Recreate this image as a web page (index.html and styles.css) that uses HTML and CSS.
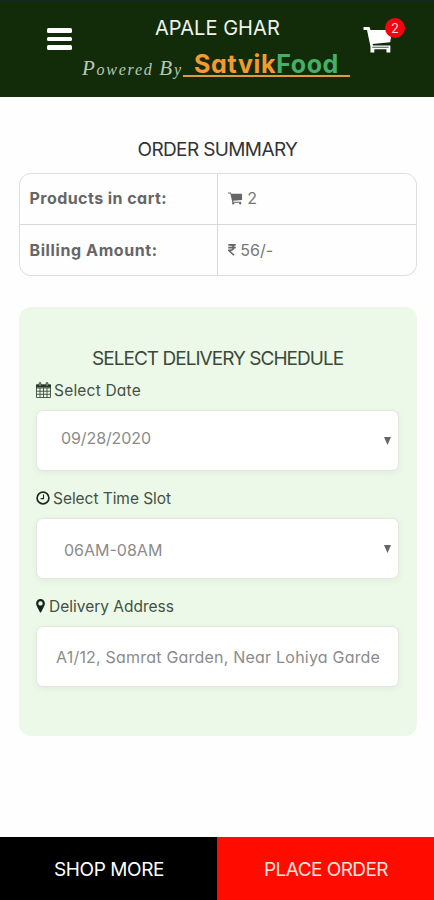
FILE: index.html
```html
<!DOCTYPE html>
<html lang="en">
<head>
<meta charset="utf-8">
<meta name="viewport" content="width=device-width, initial-scale=1">
<title>Apale Ghar - Order Summary</title>
<link rel="stylesheet" href="styles.css">
</head>
<body>
<div class="page">
  <header class="header">
    <button class="menu" aria-label="Menu"><i></i><i></i><i></i></button>
    <div class="brand">
      <h1 class="store">APALE GHAR</h1>
      <div class="tagline">
        <span class="powered"><span class="initial">P</span>owered <span class="initial">B</span>y</span>
        <span class="logo"><b class="satvik">Satvik</b><b class="food">Food</b></span>
      </div>
    </div>
    <div class="cart">
      <svg class="cart-icon" viewBox="0 0 32 28"><path fill="#fff" d="M1 0h6.200l1 3H31l-2.400 12.800-18.300 1.900.5 1.600h18v7.200h-4v-3.400H12.200v3.400h-4v-6.300L4.600 3H1z"/><path stroke="#122c0a" stroke-width=".8" d="M10 21h17"/></svg>
      <span class="badge">2</span>
    </div>
  </header>

  <main class="main">
    <h2 class="heading summary-title">ORDER SUMMARY</h2>
    <section class="summary">
      <div class="cell label products">Products in cart:</div>
      <div class="cell value"><svg class="mini-cart" viewBox="0 0 16 14"><path fill="#666" d="M0 1h3l.5 1.500H15V9l-9.500 1 .2 1H14v1H4.700L2.500 2.200H0z"/><circle cx="5.500" cy="12.800" r="1.200" fill="#666"/><circle cx="13" cy="12.800" r="1.200" fill="#666"/></svg><span>2</span></div>
      <div class="cell label billing">Billing Amount:</div>
      <div class="cell value"><svg class="rupee" viewBox="0 0 9 13"><path fill="none" stroke="#666" stroke-width="1.800" d="M.3 1.300h8.400M.3 4.400h8.400M.3 1.300h2.500c4.800 0 4.800 6.100 0 6.100H.8L6.800 13"/></svg><span class="amount">56/-</span></div>
    </section>

    <section class="schedule">
      <h2 class="heading schedule-title">SELECT DELIVERY SCHEDULE</h2>
      <div class="field">
        <div class="caption"><svg class="calendar" viewBox="0 0 15 16"><path fill="none" stroke="#26382a" stroke-width=".8" d="M.5 3h14v12.500H.5zM.5 6h14M.5 9.200h14M.5 12.300h14M4 6v9.500M7.500 6v9.500M11 6v9.500"/><path fill="#26382a" d="M0 2.500h15V5.500H0z"/><path stroke="#26382a" stroke-width="2.600" stroke-linecap="round" d="M4 1.500v2M11 1.500v2"/><path stroke="#edf9e8" stroke-width=".8" d="M4 1.200v2.600M11 1.200v2.600"/></svg><span class="cap-date">Select Date</span></div>
        <div class="control date"><span>09/28/2020</span><svg class="arrow" viewBox="0 0 7 8"><path fill="#666" d="M0 0h7L3.500 8z"/></svg></div>
      </div>
      <div class="field">
        <div class="caption"><svg class="clock" viewBox="0 0 14 14"><circle cx="7" cy="7" r="5.900" fill="none" stroke="#1d2c20" stroke-width="1.700"/><path fill="none" stroke="#1d2c20" stroke-width="1.100" d="M7.500 3.400v4.200H4.600"/></svg><span class="cap-time">Select Time Slot</span></div>
        <div class="control time"><span>06AM-08AM</span><svg class="arrow" viewBox="0 0 7 8"><path fill="#666" d="M0 0h7L3.500 8z"/></svg></div>
      </div>
      <div class="field">
        <div class="caption"><svg class="pin" viewBox="0 0 9 14"><path fill="#17231a" fill-rule="evenodd" d="M4.500 0A4.400 4.400 0 0 0 .1 4.400c0 1.200.4 2 .9 3L3.800 13c.3.8 1.100.8 1.400 0L8 7.400c.5-1 .9-1.800.9-3A4.400 4.400 0 0 0 4.500 0zm0 2.200a2.200 2.200 0 1 1 0 4.400 2.200 2.200 0 0 1 0-4.400z"/></svg><span class="cap-address">Delivery Address</span></div>
        <div class="control address"><span>A1/12, Samrat Garden, Near Lohiya Garde</span></div>
      </div>
    </section>
  </main>

  <footer class="footer">
    <button class="action shop"><span>SHOP MORE</span></button>
    <button class="action order"><span>PLACE ORDER</span></button>
  </footer>
</div>
</body>
</html>
```
FILE: styles.css
```css
* { box-sizing: border-box; }
body {
  margin: 0;
  background: #fefefe;
  font-family: Inter, "Liberation Sans", sans-serif;
  font-feature-settings: "cv11" 1;
  color: #666;
}
h1, h2 { margin: 0; font-weight: 400; }
svg { display: block; flex: none; }
button { border: 0; padding: 0; font: inherit; font-feature-settings: inherit; }
span, b, h1, h2, .label { white-space: nowrap; }

.page { height: 900px; display: flex; flex-direction: column; }

.header {
  height: 97px;
  flex: none;
  display: grid;
  grid-template-columns: 80px 271px 83px;
  background: #122c0a;
  border-top: 2px solid #122a1c;
}
.menu {
  align-self: start;
  margin: 26px 0 0 47px;
  width: 25px;
  display: flex;
  flex-direction: column;
  gap: 4px;
  background: none;
}
.menu i { height: 4.5px; background: #fff; border-radius: 1.5px; }
.brand { padding-top: 14px; }
.store {
  margin-left: 75px;
  font-size: 20px;
  line-height: 24px;
  letter-spacing: .05px;
  color: #eef3ec;
}
.tagline { display: flex; height: 38px; }
.powered {
  width: 103px;
  padding: 16px 0 0 2px;
  font: italic 16px/24px "Liberation Serif", serif;
  letter-spacing: 1.75px;
  color: #b9c9b5;
}
.initial { font-size: 21px; }
.logo {
  width: 167px;
  height: 37px;
  padding: 11px 0 0 11px;
  border-bottom: 2px solid #e39a3c;
  font-size: 25px;
  line-height: 26px;
}
.satvik { color: #f69a2d; letter-spacing: .7px; }
.food { color: #45b068; letter-spacing: .55px; }
.cart { position: relative; }
.cart-icon { width: 32px; height: 27px; margin: 25px 0 0 11px; }
.badge {
  position: absolute;
  left: 34px;
  top: 16px;
  width: 20px;
  height: 20px;
  border-radius: 50%;
  background: #f4040c;
  color: #ffd9d9;
  font-size: 13px;
  line-height: 20px;
  text-align: center;
}

.main { flex: 1; padding: 38px 17.5px 0 18.5px; }
.heading { font-size: 19px; line-height: 30px; }
.summary-title { margin-left: 119px; color: #333; letter-spacing: -.62px; }
.summary {
  margin-top: 8px;
  height: 103px;
  display: grid;
  grid-template: 1fr 1fr / 1fr 1fr;
  gap: 1.5px;
  background: #d8d8d8;
  border: 1.5px solid #dedede;
  border-radius: 12px;
  overflow: hidden;
}
.cell {
  display: flex;
  align-items: center;
  padding: 0 0 1px 10px;
  background: #fefefe;
  font-size: 16px;
}
.label { font-weight: 700; }
.products { letter-spacing: .45px; }
.billing { letter-spacing: .6px; }
.value { color: #777; }
.mini-cart { width: 15px; height: 14px; margin-right: 4px; }
.rupee { width: 8px; height: 13px; margin-right: 4px; }

.schedule {
  margin-top: 31px;
  height: 429px;
  padding: 37px 17.5px 0;
  border-radius: 12px;
  background: #edf9e8;
}
.schedule-title { margin-left: 56px; color: #3b493a; letter-spacing: -.97px; }
.field { height: 108px; }
.caption {
  height: 36px;
  display: flex;
  align-items: center;
  padding-bottom: 4px;
  color: #435045;
  font-size: 15.5px;
}
.cap-date { letter-spacing: .2px; }
.cap-time { letter-spacing: -.05px; }
.calendar { width: 15px; height: 16px; margin-right: 3px; }
.clock { width: 14px; height: 14px; margin-right: 3px; }
.pin { width: 9px; height: 14px; margin-right: 4px; }
.control {
  height: 61px;
  display: flex;
  align-items: center;
  justify-content: space-between;
  padding: 0 7.5px 0 24px;
  background: #fff;
  border: 1.5px solid #e2e8e0;
  border-radius: 7px;
  box-shadow: 0 2px 6px rgba(60, 80, 90, .07);
  color: #8b8b8b;
  font-size: 16px;
}
.date span { margin-top: -6px; letter-spacing: -.1px; }
.time { padding-left: 27px; }
.time span { margin-top: 3px; }
.address { padding-left: 19px; letter-spacing: .21px; }
.arrow { width: 7px; height: 8px; }

.footer { height: 63px; display: grid; grid-template-columns: 1fr 1fr; }
.action { color: #fff; font-size: 19px; text-align: left; padding-top: 2px; }
.shop { background: #000; padding-left: 54px; letter-spacing: -.4px; }
.order { background: #ff0b00; padding-left: 47px; color: #ffe3dd; letter-spacing: -.55px; }
```
